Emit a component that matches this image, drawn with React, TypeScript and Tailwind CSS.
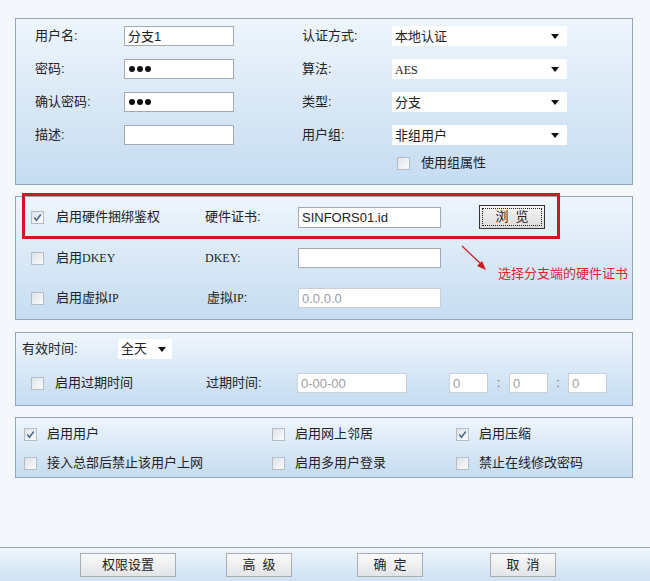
import React from "react";

const Check = ({ checked = false }: { checked?: boolean }) => (
  <span className="relative inline-block w-[13px] h-[13px] shrink-0 border border-[#b4bcc6] bg-linear-to-br from-[#dfe3e8] to-[#fbfcfd]">
    {checked && (
      <svg viewBox="0 0 13 13" className="absolute left-[-1px] top-[-1px] w-[13px] h-[13px]">
        <path d="M3.2 6.6 L5.4 9.2 L9.8 3.4" fill="none" stroke="#4a6a8e" strokeWidth="1.6" />
      </svg>
    )}
  </span>
);

const Dots = () => (
  <span className="flex items-center gap-[2px] pl-[1px]">
    <span className="w-[6px] h-[6px] rounded-full bg-[#111]" />
    <span className="w-[6px] h-[6px] rounded-full bg-[#111]" />
    <span className="w-[6px] h-[6px] rounded-full bg-[#111]" />
  </span>
);

const Input = ({ value = "", w, h = 20, disabled = false, pass = false }: { value?: string; w: number; h?: number; disabled?: boolean; pass?: boolean }) => (
  <div
    className={`flex items-center px-[3px] bg-white border ${disabled ? "border-[#c9cfd6] text-[#9aa0a6]" : "border-[#a3aab3] text-[#222]"}`}
    style={{ width: w, height: h }}
  >
    {pass ? <Dots /> : <span className="text-[13px] leading-none">{value}</span>}
  </div>
);

const Select = ({ children, w }: { children: React.ReactNode; w: number }) => (
  <div className="flex items-center justify-between h-[20px] bg-white pl-[3px] pr-[8px] text-[13px] text-[#222]" style={{ width: w }}>
    <span className="leading-none">{children}</span>
    <svg viewBox="0 0 8 5" className="w-[8px] h-[5px]">
      <path d="M0 0 H8 L4 5 Z" fill="#111" />
    </svg>
  </div>
);

const Btn = ({ children, w }: { children: React.ReactNode; w: number }) => (
  <div
    className="h-[24px] flex items-center justify-center border border-[#a9adb2] bg-linear-to-b from-[#fafafa] to-[#e2e4e6] text-[13px] text-[#222]"
    style={{ width: w }}
  >
    {children}
  </div>
);

const panel = "border border-[#93a5b6] bg-linear-to-b from-[#eef5fc] to-[#c5dcf1]";
const serif = "font-['Liberation_Serif'] text-[12px]";

export default function App() {
  return (
    <div className="w-[650px] h-[581px] bg-[#f4f8fc] flex flex-col font-['Liberation_Sans','Noto_Sans_CJK_SC',sans-serif] text-[13px] text-[#222] overflow-hidden">
      <div className="pt-[18px] pl-[15px] flex flex-col">
        {/* Panel 1 */}
        <div className={`${panel} w-[618px] h-[167px] pt-[7px] pl-[19px] flex flex-col gap-[13px]`}>
          {[
            ["用户名:", <Input value="分支1" w={110} />, "认证方式:", <Select w={175}>本地认证</Select>],
            ["密码:", <Input pass w={110} />, "算法:", <Select w={175}><span className={serif}>AES</span></Select>],
            ["确认密码:", <Input pass w={110} />, "类型:", <Select w={175}>分支</Select>],
            ["描述:", <Input w={110} />, "用户组:", <Select w={175}>非组用户</Select>],
          ].map((r, i) => (
            <div key={i} className="flex items-center h-[20px]">
              <span className="w-[89px]">{r[0]}</span>
              {r[1]}
              <span className="ml-[68px] w-[90px]">{r[2]}</span>
              {r[3]}
            </div>
          ))}
          <div className="flex items-center h-[20px] -mt-[5px] pl-[362px] gap-[11px]">
            <Check />
            <span>使用组属性</span>
          </div>
        </div>

        {/* Panel 2 */}
        <div className={`${panel} relative mt-[11px] w-[618px] h-[124px] pt-[8px] pl-[15px] flex flex-col gap-[16px]`}>
          <div className="flex items-center h-[24px]">
            <Check checked />
            <span className="ml-[12px] w-[149px]">启用硬件捆绑鉴权</span>
            <span className="w-[93px]">硬件证书:</span>
            <Input value="SINFORS01.id" w={143} h={21} />
            <div className="ml-[38px] w-[66px] h-[24px] border border-[#333] bg-linear-to-b from-[#f7f7f7] to-[#dadada] p-[2px]">
              <div className="w-full h-full border border-dotted border-[#222] flex items-center justify-center text-[13px]">浏&nbsp;&nbsp;览</div>
            </div>
          </div>
          <div className="flex items-center h-[24px] mt-[1px]">
            <Check />
            <span className="ml-[12px] w-[149px]">启用<span className={serif}>DKEY</span></span>
            <span className={`w-[93px] ${serif}`}>DKEY:</span>
            <Input w={143} />
          </div>
          <div className="flex items-center h-[24px]">
            <Check />
            <span className="ml-[12px] w-[151px]">启用虚拟<span className={serif}>IP</span></span>
            <span className="w-[91px]">虚拟<span className={serif}>IP</span>:</span>
            <Input value="0.0.0.0" w={143} disabled />
          </div>

          {/* annotation */}
          <div className="absolute left-[6px] top-[-4px] w-[538px] h-[46px] border-[3px] border-[#cf1720]" />
          <svg className="absolute left-[444px] top-[47px] w-[30px] h-[30px]" viewBox="0 0 30 30">
            <path d="M2 2 L22 21" stroke="#c8161e" strokeWidth="1.2" />
            <path d="M26 26 L17 22 L22 17 Z" fill="#d0161f" />
          </svg>
          <span className="absolute left-[482px] top-[67px] text-[13px] text-[#e0262c]">选择分支端的硬件证书</span>
        </div>

        {/* Panel 3 */}
        <div className={`${panel} mt-[12px] w-[618px] h-[74px] pt-[6px] flex flex-col gap-[14px]`}>
          <div className="flex items-center h-[20px] pl-[6px]">
            <span className="w-[96px]">有效时间:</span>
            <div className="w-[54px] h-[20px] bg-white flex items-center justify-between pl-[3px] pr-[6px]">
              <span>全天</span>
              <svg viewBox="0 0 8 5" className="w-[8px] h-[5px]"><path d="M0 0 H8 L4 5 Z" fill="#111" /></svg>
            </div>
          </div>
          <div className="flex items-center h-[20px] pl-[15px]">
            <Check />
            <span className="ml-[11px] w-[151px]">启用过期时间</span>
            <span className="w-[91px]">过期时间:</span>
            <Input value="0-00-00" w={110} disabled />
            <div className="ml-[42px]"><Input value="0" w={39} disabled /></div>
            <span className="w-[21px] text-center text-[#666]">:</span>
            <Input value="0" w={39} disabled />
            <span className="w-[20px] text-center text-[#666]">:</span>
            <Input value="0" w={39} disabled />
          </div>
        </div>

        {/* Panel 4 */}
        <div className={`${panel} mt-[11px] w-[618px] h-[61px] pt-[6px] pl-[8px] flex flex-col gap-[9px]`}>
          {[
            [["启用用户", true], ["启用网上邻居", false], ["启用压缩", true]],
            [["接入总部后禁止该用户上网", false], ["启用多用户登录", false], ["禁止在线修改密码", false]],
          ].map((row, i) => (
            <div key={i} className="grid grid-cols-[248px_184px_1fr] h-[20px] items-center">
              {row.map(([t, c], j) => (
                <div key={j} className="flex items-center gap-[10px]">
                  <Check checked={c as boolean} />
                  <span>{t as string}</span>
                </div>
              ))}
            </div>
          ))}
        </div>
      </div>

      {/* Footer */}
      <div className="mt-auto h-[34px] border-t border-[#9aa9b7] bg-linear-to-b from-[#eef5fc] to-[#cfe2f4] flex pt-[5px] pl-[80px]">
        <Btn w={96}>权限设置</Btn>
        <div className="ml-[50px]"><Btn w={66}>高&nbsp;&nbsp;级</Btn></div>
        <div className="ml-[65px]"><Btn w={66}>确&nbsp;&nbsp;定</Btn></div>
        <div className="ml-[67px]"><Btn w={66}>取&nbsp;&nbsp;消</Btn></div>
      </div>
    </div>
  );
}
